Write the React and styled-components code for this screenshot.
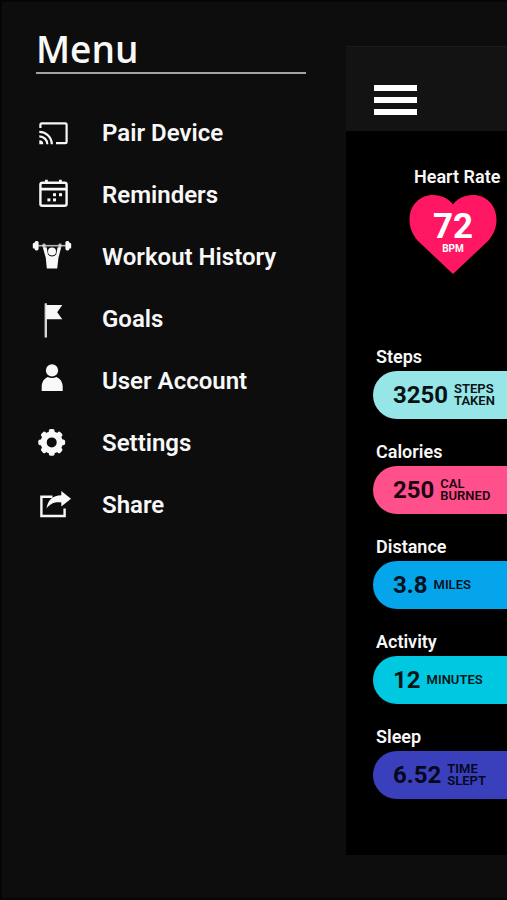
import React from "react";
import styled, { createGlobalStyle, ThemeProvider } from "styled-components";

const theme = {
  colors: {
    background: "#0d0d0d",
    header: "#131313",
    screen: "#000",
    rule: "#a6a29f",
    text: "#f8f8f8",
    heart: "#ff1764",
  },
  fonts: {
    title: "'Open Sans', 'Noto Sans', sans-serif",
    main: "Roboto, Arial, sans-serif",
  },
};

const GlobalStyle = createGlobalStyle`
  * {
    box-sizing: border-box;
  }

  body {
    margin: 0;
    background: #0d0d0d;
  }
`;

const Page = styled.div`
  display: grid;
  grid-template-columns: 344px minmax(0, 1fr);
  align-items: start;
  min-height: 100vh;
  border: 2px solid #050505;
  border-right: 0;
  background: ${({ theme }) => theme.colors.background};
  color: ${({ theme }) => theme.colors.text};
  font-family: ${({ theme }) => theme.fonts.main};
  overflow: hidden;
`;

const Drawer = styled.nav`
  padding: 23px 40px 0 34px;
`;

const DrawerTitle = styled.h1`
  height: 49px;
  margin: 0;
  border-bottom: 2px solid ${({ theme }) => theme.colors.rule};
  font-family: ${({ theme }) => theme.fonts.title};
  font-size: 37px;
  font-weight: 600;
  line-height: 48px;
`;

const MenuList = styled.ul`
  list-style: none;
  margin: 28px 0 0 -4px;
  padding: 0;
`;

const MenuLink = styled.a`
  display: flex;
  align-items: center;
  gap: 30px;
  height: 62px;
  color: inherit;
  font-size: 24px;
  font-weight: 600;
  line-height: 28px;
  text-decoration: none;
  white-space: nowrap;
`;

const MenuIcon = styled.svg`
  flex: none;
  width: 40px;
  height: 40px;
  overflow: visible;
`;

const Dashboard = styled.main`
  margin-top: 44px;
  padding-bottom: 56px;
  background: ${({ theme }) => theme.colors.screen};
`;

const TopBar = styled.header`
  display: flex;
  align-items: center;
  height: 85px;
  padding: 22px 28px 0;
  border-top: 1px solid #1b1b1b;
  background: ${({ theme }) => theme.colors.header};
`;

const MenuButton = styled.button`
  display: flex;
  flex-direction: column;
  gap: 6px;
  padding: 0;
  border: 0;
  background: none;
  cursor: pointer;
`;

const Bar = styled.span`
  width: 43px;
  height: 6px;
  background: #fff;
`;

const Label = styled.h2`
  margin: 0;
  font-size: 18px;
  font-weight: 600;
  line-height: 20px;
  white-space: nowrap;
`;

const HeartRate = styled.section`
  display: flex;
  flex-direction: column;
  align-items: flex-start;
  gap: 8px;
  margin: 36px 0 73px 63px;

  ${Label} {
    padding-left: 5px;
  }
`;

const Heart = styled.div`
  display: grid;
  justify-items: center;

  > * {
    grid-area: 1 / 1;
  }
`;

const HeartShape = styled.svg`
  width: 88px;
  height: 79px;
  fill: ${({ theme }) => theme.colors.heart};
`;

const HeartReading = styled.div`
  display: flex;
  flex-direction: column;
  align-items: center;
  padding-top: 16px;
  color: #fff;
`;

const Beats = styled.span`
  font-size: 35px;
  font-weight: 700;
  line-height: 32px;
`;

const BeatsUnit = styled.span`
  font-size: 10px;
  font-weight: 700;
  line-height: 12px;
`;

const Stats = styled.div`
  display: flex;
  flex-direction: column;
  gap: 23px;
  padding-left: 27px;
`;

const Stat = styled.section`
  display: flex;
  flex-direction: column;
  gap: 4px;

  ${Label} {
    padding-left: 3px;
  }
`;

const StatPill = styled.div`
  display: flex;
  align-items: center;
  gap: 6px;
  height: 48px;
  padding-left: 20px;
  border-radius: 24px 0 0 24px;
  background: ${({ $color }) => $color};
  color: ${({ $ink }) => $ink};
`;

const StatValue = styled.span`
  font-size: 24px;
  font-weight: 700;
  line-height: 28px;
`;

const StatUnit = styled.span`
  font-size: 13px;
  font-weight: 600;
  line-height: 12px;
  white-space: pre-line;
`;

const CastIcon = () => (
  <MenuIcon viewBox="0 0 40 40" fill="none" stroke="currentColor" strokeWidth="2.2" aria-hidden="true">
    <path d="M8.4 15v-3.2q0-1.4 1.4-1.4h23.4q1.4 0 1.4 1.4v17q0 1.4-1.4 1.4H24" />
    <path d="M7.3 18.8a12.5 12.5 0 0 1 12.5 12.5M7.3 23.3a8 8 0 0 1 8 8" />
    <path d="M7.3 27.2a4 4 0 0 1 4 4h-4z" fill="currentColor" stroke="none" />
  </MenuIcon>
);

const CalendarIcon = () => (
  <MenuIcon viewBox="0 0 40 40" fill="none" stroke="currentColor" strokeWidth="2.4" aria-hidden="true">
    <rect x="8.4" y="7.8" width="26.2" height="23" rx="2" />
    <path d="M8.4 14.2h26.2M14.4 4.8v4M28.4 4.8v4" strokeWidth="2.8" />
    <g fill="currentColor" stroke="none">
      <rect x="21" y="18.2" width="3" height="3" />
      <rect x="27" y="18.2" width="3" height="3" />
      <rect x="15.4" y="23.4" width="3" height="3" />
      <rect x="21" y="23.4" width="3" height="3" />
    </g>
  </MenuIcon>
);

const WorkoutIcon = () => (
  <MenuIcon viewBox="0 0 40 40" fill="currentColor" aria-hidden="true">
    <rect x="1" y="7.9" width="38" height="1.6" opacity="0.7" />
    <rect x="2.6" y="4" width="4" height="9.4" rx="1.6" />
    <rect x="0.8" y="6" width="3" height="5.4" rx="1" />
    <rect x="33.4" y="4" width="4" height="9.4" rx="1.6" />
    <rect x="36.2" y="6" width="3" height="5.4" rx="1" />
    <rect x="10.5" y="6.4" width="3" height="4" rx="1" opacity="0.7" />
    <rect x="26.5" y="6.4" width="3" height="4" rx="1" opacity="0.7" />
    <circle cx="20" cy="14.4" r="4" />
    <path d="M10.8 10.2h3.8l1.4 7.2q1.6 2 4 2t4.2-2l1.4-7.2h3.6L26.4 21 25.2 31.4H14.8L13.8 21z" />
  </MenuIcon>
);

const FlagIcon = () => (
  <MenuIcon viewBox="0 0 40 40" fill="currentColor" aria-hidden="true">
    <rect x="12.6" y="4.3" width="2.4" height="34.2" opacity="0.85" />
    <path d="M14 6h16.3L25.2 13.3l5.1 7H14z" />
  </MenuIcon>
);

const UserIcon = () => (
  <MenuIcon viewBox="0 0 40 40" fill="currentColor" aria-hidden="true">
    <circle cx="20" cy="9.4" r="6.1" />
    <path d="M9.7 30v-4.2c0-4.8 2.6-8.4 6-9.8q4.3 2.2 8.8 0c3.6 1.4 6.2 5 6.2 9.8V30z" />
  </MenuIcon>
);

const GearIcon = () => (
  <MenuIcon viewBox="0 0 40 40" fill="currentColor" aria-hidden="true">
    <circle cx="19.7" cy="19.4" r="8" fill="none" stroke="currentColor" strokeWidth="6" />
    {[0, 45, 90, 135, 180, 225, 270, 315].map((angle) => (
      <rect key={angle} x="16.8" y="6" width="5.8" height="5" rx="1.8" transform={`rotate(${angle} 19.7 19.4)`} />
    ))}
  </MenuIcon>
);

const ShareIcon = () => (
  <MenuIcon viewBox="0 0 40 40" fill="currentColor" aria-hidden="true">
    <path d="M20.5 11.8H9.4V31h23.2v-7.5" fill="none" stroke="currentColor" strokeWidth="2.4" />
    <path d="M39 13.7 29.3 6v4.2c-8.6.2-13.4 4.6-14.8 13.4 3.6-5 8-6.8 14.8-6.2v4z" />
  </MenuIcon>
);

const menuItems = [
  { label: "Pair Device", icon: CastIcon },
  { label: "Reminders", icon: CalendarIcon },
  { label: "Workout History", icon: WorkoutIcon },
  { label: "Goals", icon: FlagIcon },
  { label: "User Account", icon: UserIcon },
  { label: "Settings", icon: GearIcon },
  { label: "Share", icon: ShareIcon },
];

const stats = [
  { label: "Steps", value: "3250", unit: "STEPS\nTAKEN", color: "#96e5e7", ink: "#081214" },
  { label: "Calories", value: "250", unit: "CAL\nBURNED", color: "#ff508c", ink: "#1c0510" },
  { label: "Distance", value: "3.8", unit: "MILES", color: "#05a5eb", ink: "#03121c" },
  { label: "Activity", value: "12", unit: "MINUTES", color: "#00c8e1", ink: "#031619" },
  { label: "Sleep", value: "6.52", unit: "TIME\nSLEPT", color: "#3a40bb", ink: "#06071c" },
];

const App = () => {
  return (
    <ThemeProvider theme={theme}>
      <GlobalStyle />
      <Page>
        <Drawer>
          <DrawerTitle>Menu</DrawerTitle>
          <MenuList>
            {menuItems.map(({ label, icon: Icon }) => (
              <li key={label}>
                <MenuLink href="#">
                  <Icon />
                  {label}
                </MenuLink>
              </li>
            ))}
          </MenuList>
        </Drawer>

        <Dashboard>
          <TopBar>
            <MenuButton type="button" aria-label="Toggle menu">
              <Bar />
              <Bar />
              <Bar />
            </MenuButton>
          </TopBar>

          <HeartRate>
            <Label>Heart Rate</Label>
            <Heart>
              <HeartShape viewBox="0 0 88 79" aria-hidden="true">
                <path d="M44 79 9 46C3 39 .5 32 .5 25 .5 10 11 0 24 0c8.5 0 15.5 3.5 20 9.5C48.5 3.5 55.5 0 64 0c13 0 23.5 10 23.5 25 0 7-2.5 14-8.5 21z" />
              </HeartShape>
              <HeartReading>
                <Beats>72</Beats>
                <BeatsUnit>BPM</BeatsUnit>
              </HeartReading>
            </Heart>
          </HeartRate>

          <Stats>
            {stats.map((stat) => (
              <Stat key={stat.label}>
                <Label>{stat.label}</Label>
                <StatPill $color={stat.color} $ink={stat.ink}>
                  <StatValue>{stat.value}</StatValue>
                  <StatUnit>{stat.unit}</StatUnit>
                </StatPill>
              </Stat>
            ))}
          </Stats>
        </Dashboard>
      </Page>
    </ThemeProvider>
  );
};

export default App;
